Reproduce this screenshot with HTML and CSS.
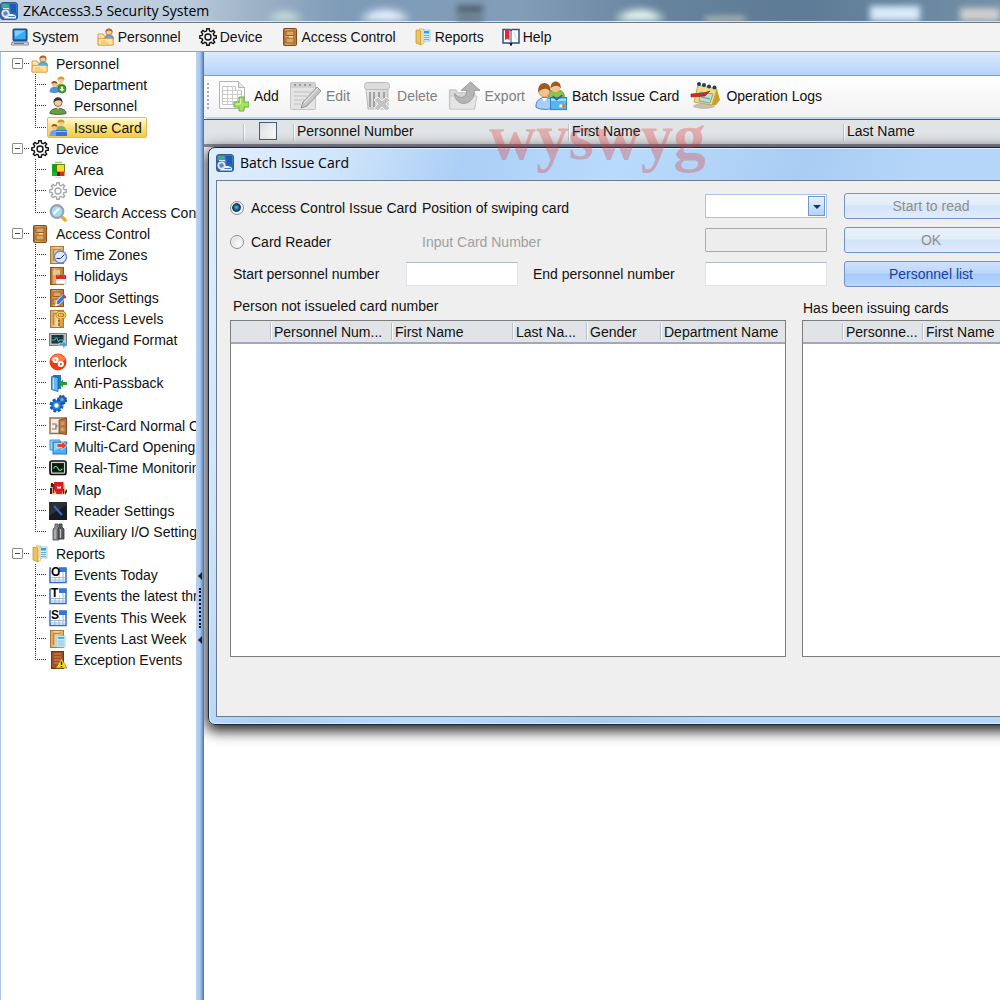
FILE: index.html
```
<!DOCTYPE html>
<html lang="en">
<head>
<meta charset="utf-8">
<title>ZKAccess3.5 Security System</title>
<link rel="stylesheet" href="styles.css">
</head>
<body>
<svg class="sprite" aria-hidden="true">
  <defs>
    <linearGradient id="gDoor" x1="0" x2="1"><stop offset="0" stop-color="#9a5a20"/><stop offset=".25" stop-color="#e8ad68"/><stop offset="1" stop-color="#b87838"/></linearGradient>
    <linearGradient id="gFold" x1="0" y1="0" x2="0" y2="1"><stop offset="0" stop-color="#fff0c0"/><stop offset="1" stop-color="#efb04e"/></linearGradient>
    <linearGradient id="gGrey" x1="0" y1="0" x2="1" y2="1"><stop offset="0" stop-color="#ececec"/><stop offset="1" stop-color="#c4c4c4"/></linearGradient>
    <linearGradient id="gFrame" x1="0" y1="0" x2="1" y2="0"><stop offset="0" stop-color="#cfa468"/><stop offset=".5" stop-color="#f6dca8"/><stop offset="1" stop-color="#dca75c"/></linearGradient>
  </defs>
  <symbol id="app" viewBox="0 0 18 18"><rect x=".5" y=".5" width="17" height="17" rx="2.500" fill="#2a68b8" stroke="#3b5c86"/><path d="M1.500 1.500h15v9L1.500 6z" fill="#4b90dc"/><path d="M9 2h7v9l-5-1z" fill="#1f5cb0"/><rect x="3" y="2.500" width="5" height="2.500" fill="#28c840"/><path d="M3 6.500h6" stroke="#dcebfa"/><path d="M6 13c2-1 7-2 10 1v2.500H4z" fill="#eef3f8"/><path d="M7 14.500h8" stroke="#4a80c0"/><circle cx="5.500" cy="11.500" r="3.200" fill="#5b88bd" stroke="#e4e8ee" stroke-width="1.800"/></symbol>
  <symbol id="computer" viewBox="0 0 18 18"><rect x="2" y="1" width="14" height="12" rx="1" fill="#2467b4" stroke="#1b3f72"/><path d="M3.500 2.500h11v8.500h-11z" fill="#38aef8"/><path d="M3.500 2.500h11L4 9z" fill="#7bd0ff"/><path d="M1 14h16l.5 3H.5z" fill="#d4d8de" stroke="#707780" stroke-width=".8"/><path d="M3 15.500h10" stroke="#777"/></symbol>
  <symbol id="folderman" viewBox="0 0 18 18"><path d="M1 17V6h5l1 2h9v9z" fill="url(#gFold)" stroke="#e09b3c"/><circle cx="12" cy="4" r="3.200" fill="#f5c99b" stroke="#99602c" stroke-width=".7"/><path d="M8.500 4C8-.5 16-.5 15.500 4c-2-2-4-2-7 0z" fill="#a7622a"/><path d="M7.500 11c0-5 9-5 9 0z" fill="#58aee8" stroke="#2c78b8" stroke-width=".6"/><path d="M1.500 10.500h14.500v6.500H1z" fill="#fde5a5" stroke="#e09b3c" stroke-width=".8"/><path d="M4 13h5M4 15h8" stroke="#eab75c"/></symbol>
  <symbol id="gear" viewBox="0 0 18 18"><g fill="none" stroke="currentColor"><path d="M7.800.8h2.400l.4 2.300 1.600.7 1.900-1.400 1.600 1.600-1.400 1.900.7 1.600 2.300.4v2.300l-2.300.4-.7 1.600 1.400 1.900-1.600 1.600-1.900-1.400-1.600.7-.4 2.200H7.800L7.400 15l-1.600-.7-1.900 1.400-1.600-1.600 1.400-1.900-.7-1.600-2.200-.4V7.900l2.200-.4.7-1.600-1.400-1.900 1.600-1.600 1.900 1.400 1.600-.7z" stroke-width="1.400"/><circle cx="9" cy="9" r="3" stroke-width="1.400"/></g></symbol>
  <symbol id="door" viewBox="0 0 18 18"><rect x="2.500" y=".5" width="13" height="17" rx="1" fill="url(#gDoor)" stroke="#84481a"/><path d="M5 3h8v4.500H5zM5 10h8v5H5z" fill="#dda462" stroke="#96602c"/><path d="M8 8.800h4" stroke="#ffe9a0" stroke-width="1.500"/></symbol>
  <symbol id="report" viewBox="0 0 18 18"><path d="M2 2l5 1v14l-5-2z" fill="#eec25c" stroke="#c28f2c" stroke-width=".7"/><path d="M5 1h5v14l-3 2V3z" fill="#ffeeb5" stroke="#d5a843" stroke-width=".7"/><rect x="9" y="2" width="7" height="11" fill="#def3fc" stroke="#8ac4e0" stroke-width=".7"/><rect x="10" y="3" width="5" height="2.500" fill="#2ea3dc"/><path d="M10 7.500h5M10 9.500h5M10 11.500h5" stroke="#75a8c0"/></symbol>
  <symbol id="help" viewBox="0 0 18 18"><path d="M1 1.500h7l1 1 1-1h7v13.500h-7l-1 2-1-2H1z" fill="#fff" stroke="#27547c" stroke-width="1.500"/><path d="M3 1h4.500v11.500l-2.200-2-2.300 2z" fill="#e62434"/><path d="M9 3v13" stroke="#27547c"/><path d="M12 4l3 8" stroke="#dde8f0" stroke-width="2"/><path d="M7.500 15h3L9 18z" fill="#111"/></symbol>
  <symbol id="dept" viewBox="0 0 18 18"><circle cx="12" cy="4" r="3" fill="#f6cb9c"/><path d="M8.500 4C8-.8 16-.8 15.500 4c-2-1.500-5-1.500-7 0z" fill="#e39a23"/><path d="M7 12c0-6 10-6 10 0v1H7z" fill="#7fb54c"/><circle cx="5.500" cy="8" r="2.800" fill="#f4c091"/><path d="M2.500 8C2 4 9 4 8.500 8c-2-1.500-4-1.500-6 0z" fill="#9a501e"/><path d="M.5 16c0-7 10-7 10 0-3 1.500-7 1.500-10 0z" fill="#4c93dc"/><circle cx="13" cy="13" r="4" fill="#4a9a3c" stroke="#2a6a25" stroke-width=".7"/><path d="M12 10.500h2v2.500h1.500L13 15.800 10.500 13H12z" fill="#e9ffd8"/></symbol>
  <symbol id="person" viewBox="0 0 18 18"><path d="M.8 16.500c0-7 16.400-7 16.400 0-4 1.300-12 1.300-16.400 0z" fill="#659f48" stroke="#325d2a" stroke-width=".8"/><circle cx="9" cy="5.500" r="4" fill="#f3ca9d" stroke="#654020" stroke-width=".7"/><path d="M4.500 5.500C4-1.500 14-1.500 13.500 5.500c-1-3-6-3-9 0z" fill="#373028"/><path d="M7 10.500h4l-2 2z" fill="#f3ca9d"/></symbol>
  <symbol id="issue" viewBox="0 0 18 18"><circle cx="12" cy="4" r="3" fill="#f6cb9c"/><path d="M8.500 4C8-.8 16-.8 15.500 4c-2-1.500-5-1.500-7 0z" fill="#d5901f"/><path d="M7 11c0-5.500 10-5.500 10 0z" fill="#7fb54c"/><circle cx="5.500" cy="8" r="2.800" fill="#f4c091"/><path d="M2.500 8C2 4 9 4 8.500 8c-2-1.500-4-1.500-6 0z" fill="#9a501e"/><path d="M.5 17c0-8 10-8 10 0z" fill="#6ba6e6"/><rect x="7" y="11" width="11" height="6" fill="#3675dc"/><path d="M7 12.500h11" stroke="#9cc5ff"/></symbol>
  <symbol id="area" viewBox="0 0 18 18"><path d="M6 1.500h7" stroke="#9bcb67" stroke-width="1.500"/><rect x="3" y="3" width="6" height="12" fill="#13a021"/><rect x="7.500" y="3.500" width="8" height="7.500" fill="#f8da1e" stroke="#4a6a00" stroke-width=".8"/><rect x="3" y="11" width="5" height="4" fill="#16b82c"/><rect x="8" y="11" width="3" height="4" fill="#6b1c10"/><rect x="11" y="11" width="4.500" height="4" fill="#e3271b"/><path d="M6 16.500h6" stroke="#ffd0a0"/></symbol>
  <symbol id="search" viewBox="0 0 18 18"><path d="M13.500 13.500l2.500 2.500" stroke="#f2ab20" stroke-width="3.500" stroke-linecap="round"/><circle cx="8" cy="7.500" r="6.300" fill="#a9dbf8" stroke="#9ca3aa" stroke-width="2.200"/><path d="M4 9l5-5 2 1-6 6z" fill="#f2fbff"/></symbol>
  <symbol id="frame" viewBox="0 0 18 18"><rect x="1.500" y=".5" width="13" height="17" fill="url(#gFrame)" stroke="#ae7835"/><path d="M4.500 15V3.500H12" fill="none" stroke="#c08a44" stroke-width="1.500"/></symbol>
  <symbol id="timezone" viewBox="0 0 18 18"><use href="#frame"/><circle cx="11.500" cy="11" r="6" fill="#dcecff" stroke="#6f82cf" stroke-width="1.300"/><path d="M7.500 12.500l4 0 4-4" stroke="#28306e" fill="none"/></symbol>
  <symbol id="holiday" viewBox="0 0 18 18"><rect x="1.500" y=".5" width="13" height="17" fill="url(#gDoor)" stroke="#8d5420"/><path d="M4 3h7v5H4z" fill="#edc58a"/><rect x="7" y="9" width="10" height="8" fill="#fff" stroke="#bbb" stroke-width=".7"/><path d="M7 8h10v4H7z" fill="#dd2920"/><path d="M9 6.500v3M15 6.500v3" stroke="#999"/></symbol>
  <symbol id="doorset" viewBox="0 0 18 18"><rect x="1.500" y=".5" width="13" height="17" fill="url(#gDoor)" stroke="#8d5420"/><path d="M4 3h8v4.500H4zM4 10h8v5H4z" fill="#dca562" stroke="#9a602a"/><path d="M14.500 5l3 3-7 7-4 2 1.200-5z" fill="#2f7ae0" stroke="#fff" stroke-width=".9"/><path d="M14.500 5l3 3-1.500 1.500-3-3z" fill="#db3a30"/><path d="M6.500 17l.8-2.800 1.700 1.600z" fill="#fff"/></symbol>
  <symbol id="levels" viewBox="0 0 18 18"><use href="#frame"/><g fill="none" stroke="#a86c10"><ellipse cx="12" cy="5" rx="4" ry="2.800" stroke-width="2.800"/><path d="M12 7v10M12 11h-3M12 14.500h-3" stroke-width="2.600"/></g><g fill="none" stroke="#f8cf50"><ellipse cx="12" cy="5" rx="4" ry="2.800" stroke-width="1.500"/><path d="M12 7.500v9" stroke-width="1.300"/></g></symbol>
  <symbol id="wiegand" viewBox="0 0 18 18"><rect x=".5" y="2.500" width="17" height="12" fill="#b8bec2" stroke="#777d82"/><rect x="2.500" y="4" width="12" height="8.500" fill="#17313a"/><path d="M3 9h3l1.500-3 2 5 1-2H14" fill="none" stroke="#43cfc6"/><path d="M3 6.500h11M6 4v8" stroke="#3a626a" stroke-width=".5"/><path d="M10 12h4V9.500l4 4-4 4V15h-4z" fill="#3f9bea" stroke="#fff" stroke-width=".5"/></symbol>
  <symbol id="interlock" viewBox="0 0 18 18"><circle cx="9" cy="9" r="8.500" fill="#ea3b15"/><path d="M1.500 7a7.800 7.800 0 0 1 15 0c-4 2-11 2-15 0z" fill="#f87e4a"/><circle cx="6.500" cy="7" r="2.100" fill="none" stroke="#fff" stroke-width="2"/><circle cx="11.800" cy="11" r="2.100" fill="none" stroke="#fff" stroke-width="2"/></symbol>
  <symbol id="passback" viewBox="0 0 18 18"><path d="M4 1h8v14H4z" fill="#1f77c6"/><path d="M2.500 2.500l6.500 1v14l-6.500-2z" fill="#68b8f0" stroke="#1760a5" stroke-width=".8"/><path d="M4.500 4v11" stroke="#b7e1ff"/><path d="M10 9.500l4-4v2.600h4V11h-4v2.600z" fill="#2f9c38"/></symbol>
  <symbol id="linkage" viewBox="0 0 18 18"><circle cx="13" cy="5" r="4" fill="#2873c7" stroke="#174b94" stroke-dasharray="2 1.140" stroke-width="2"/><circle cx="7.500" cy="10.500" r="5.500" fill="#2e80d6" stroke="#165ab0" stroke-width="3" stroke-dasharray="2.800 1.520"/><circle cx="7.500" cy="10.500" r="2.200" fill="#fff"/><circle cx="13" cy="4.500" r="1.500" fill="#6baaf0"/></symbol>
  <symbol id="firstcard" viewBox="0 0 18 18"><rect x="1" y="1" width="16" height="15.500" fill="#f4ece2" stroke="#9a7044" stroke-width="1.500"/><path d="M10 3l7.500-2v16.500L10 16z" fill="#b8713b" stroke="#784116" stroke-width=".8"/><path d="M11.500 5l4-1v4l-4 .5zM11.500 10.500h4v4l-4-.5z" fill="#d59a64"/><path d="M3 12h4V9M3 7h4v2h2" fill="none" stroke="#777" stroke-width="1.200"/></symbol>
  <symbol id="multicard" viewBox="0 0 18 18"><path d="M1 2h10v10H1z" fill="#9ed2f8" stroke="#3b8fd6"/><rect x="4" y="4" width="13.500" height="12" fill="#4fb0f0" stroke="#2079c5"/><path d="M5 5h11v3L5 13z" fill="#8fd2fb"/><path d="M8 5.500h5V3l5 4.500-5 4.500V9.500H8z" fill="#e6432a" stroke="#fff" stroke-width=".6"/></symbol>
  <symbol id="monitor" viewBox="0 0 18 18"><rect x="1" y="2" width="16" height="13.500" rx="2" fill="#d7d7d7" stroke="#111" stroke-width="1.700"/><rect x="3.500" y="4.500" width="11" height="8.500" fill="#0b1a10" stroke="#222"/><path d="M4.500 9.500c1.500-3 3-3 4.500 0s3 2 4.500 0" fill="none" stroke="#70e486" stroke-width="1.200"/></symbol>
  <symbol id="map" viewBox="0 0 18 18"><path d="M1 3l4 1 4-1 4 1 3-1v10l-3 1-4-1-4 1-4-1z" fill="#e9cf9e"/><path d="M2 2h2v4H2zM1 7h2v6H1z" fill="#23242c"/><path d="M5 1h9.500v7l-2 5h-5L5 8z" fill="#d91d20"/><path d="M8 5l2 1 2-1v2.500H8z" fill="#fff"/><path d="M4.500 3v9M14.500 8v5" stroke="#8d1418" stroke-width="1.500"/><path d="M16 10l2-2v3l-2 3z" fill="#333"/></symbol>
  <symbol id="reader" viewBox="0 0 18 18"><rect width="18" height="18" fill="#17191f"/><path d="M0 0h18v3L0 14z" fill="#2b2f36"/><path d="M5 4l8 9" stroke="#2e6fd2" stroke-width="2"/></symbol>
  <symbol id="aux" viewBox="0 0 18 18"><path d="M4 17V6l2-2V1h3v3l1 2v11z" fill="#8a8c8e" stroke="#4c4c4c" stroke-width=".8"/><path d="M9 16V6l1-2V1h3v3l2 2v10z" fill="#5a5c5e" stroke="#2f2f2f" stroke-width=".8"/><path d="M6 7v9M11.500 6v9" stroke="#c2c4c5" stroke-width="1.200"/></symbol>
  <symbol id="calendar" viewBox="0 0 18 18"><rect x="1" y="2" width="16" height="14.500" fill="#fff" stroke="#2d6fc8" stroke-width="1.500"/><path d="M9 2h8.500v4H9z" fill="#3576d0"/><path d="M2 11.500h14.500M2 14h14.500M6 8v8M10 8v8M14 6v10" stroke="#9fb8d6"/><path d="M2 1h8v10H2z" fill="#fff"/></symbol>
  <symbol id="lastweek" viewBox="0 0 18 18"><use href="#frame"/><rect x="8" y="6" width="8" height="11" fill="#e2f5fd" stroke="#8fc9e5" stroke-width=".8"/><path d="M9 7h6v2H9z" fill="#3bb5e8"/><path d="M9 11h6M9 13h6M9 15h6" stroke="#6dbbdd"/></symbol>
  <symbol id="exception" viewBox="0 0 18 18"><rect x="2.500" y=".5" width="12" height="17" fill="#a34f26" stroke="#6f3212"/><path d="M5 3h7M5 6h7M5 9h7M5 12h5" stroke="#c4774a" stroke-width="1.300"/><path d="M12.500 7.500l5.300 9.500H7z" fill="#f8d825" stroke="#9c7c00" stroke-width=".7"/><path d="M12.500 10.500v3.500M12.500 15v1.200" stroke="#222" stroke-width="1.400"/></symbol>

  <symbol id="add" viewBox="0 0 32 32"><path d="M2.500 1.500h19l6 6v21h-25z" fill="#fafafa" stroke="#b4b4b4"/><path d="M21.500 1.500v6h6" fill="#e6e6e6" stroke="#b4b4b4"/><path d="M5.500 6.500h13v4h6v14h-19z" fill="#fff" stroke="#c4c4c4"/><path d="M5 10.500h19M5 14.500h19M5 18.500h19M5 21.500h19M10.500 6v18M15.500 6v18M20.500 10v14" stroke="#cdcdcd"/><path d="M22 17h5v5h5v5h-5v4h-5v-4h-5v-5h5z" fill="#a5e060" stroke="#6fb13c"/><path d="M23.500 19v5H19" stroke="#d9f8b0" fill="none"/></symbol>
  <symbol id="edit" viewBox="0 0 32 32"><rect x="1.500" y="2.500" width="25" height="27" rx="1" fill="#e4e4e4" stroke="#c4c4c4"/><path d="M2 3h24v5H2z" fill="#d2d2d2"/><path d="M5 5h2M10 5h2M15 5h2M20 5h2" stroke="#999" stroke-width="2"/><path d="M5 12h17M5 16h13M5 20h10M5 24h7" stroke="#c0c0c0"/><path d="M28 7l4 4-14 15-6 2 2-6z" fill="#c6c6c6" stroke="#989898"/><path d="M29 8L15 23" stroke="#eee"/></symbol>
  <symbol id="delete" viewBox="0 0 32 32"><path d="M6 9h22v20H8z" fill="url(#gGrey)" stroke="#bbb"/><rect x="4.500" y="2.500" width="25" height="7" rx="3" fill="#dcdcdc" stroke="#b8b8b8"/><path d="M10 12v15M14 12v15M19 12v7M24 12v6" stroke="#a2a2a2" stroke-width="2"/><path d="M18 17l4 4 4-4 4 3-4 4 4 4-4 3-4-4-4 4-4-3 4-4-4-4z" fill="#c4c4c4" stroke="#f4f4f4"/></symbol>
  <symbol id="export" viewBox="0 0 34 32"><path d="M1.500 29.500v-20h7l2 3h18v17z" fill="#dadada" stroke="#bcbcbc"/><path d="M2 16h29l-3 14H2z" fill="#e4e4e4" stroke="#c6c6c6"/><path d="M7 13c0 15 21 15 21-3h6L24 1 14 10h6c0 9-9 10-13 3z" fill="#b4b4b4" stroke="#9a9a9a"/></symbol>
  <symbol id="batch" viewBox="0 0 34 32"><path d="M14 16c0-9 17-9 17 0v6H14z" fill="#8cc34f" stroke="#5f9130"/><circle cx="22" cy="7" r="5" fill="#f5c48e"/><path d="M16.500 8C16-2 28-2 27.500 8c-2-4-8-4-11 0z" fill="#9a5b20"/><path d="M1 28c-1-14 20-14 19 0-4 3-14 3-19 0z" fill="#a7cff5" stroke="#3c7fc6"/><circle cx="10" cy="11" r="6" fill="#f5c48e" stroke="#b06d35" stroke-width=".6"/><path d="M3.500 12C2-1 18-1 16.500 12c-2-5-9-5-13 0z" fill="#a1571d"/><path d="M7 18l3 4 3-4" fill="#fff"/><rect x="16.500" y="17.500" width="17" height="13" fill="#55b4f2" stroke="#2a82c8"/><path d="M17 20h16" stroke="#b6e2ff" stroke-width="2"/><path d="M19 16l4 4 6-5" stroke="#2456a4" stroke-width="1.500" fill="none"/><path d="M26 25h3v3h-3z" fill="#fff"/><path d="M29 25h3v3h-3z" fill="#e57d28"/></symbol>
  <symbol id="logs" viewBox="0 0 32 32"><ellipse cx="15" cy="26" rx="11" ry="3" fill="#c4c0b8"/><path d="M9 5l19 4-5 16-18-3z" fill="#f2dc86" stroke="#c6a443"/><path d="M28 9l3 11-4 5h-4z" fill="#c9a02c"/><path d="M11 12l13 2-3 9-11-2z" fill="#b8ddd2" stroke="#80a9a0"/><path d="M12 17l9 2" stroke="#619a91"/><g fill="#233b6f"><circle cx="10" cy="4" r="2"/><circle cx="15" cy="5" r="2"/><circle cx="20" cy="6.500" r="2"/><circle cx="25.500" cy="7.500" r="2"/></g><path d="M2 14l13-1 6-2-5 5-14 1z" fill="#d42b1c" stroke="#8a1710" stroke-width=".6"/></symbol>
</svg>

<header class="titlebar">
  <span class="smudges" aria-hidden="true"></span>
  <svg class="icon"><use href="#app"/></svg><h1>ZKAccess3.5 Security System</h1>
</header>
<nav class="menubar">
  <button><svg class="icon"><use href="#computer"/></svg>System</button>
  <button><svg class="icon"><use href="#folderman"/></svg>Personnel</button>
  <button><svg class="icon"><use href="#gear"/></svg>Device</button>
  <button><svg class="icon"><use href="#door"/></svg>Access Control</button>
  <button><svg class="icon"><use href="#report"/></svg>Reports</button>
  <button><svg class="icon"><use href="#help"/></svg>Help</button>
</nav>

<div class="workspace">
  <aside class="tree">
    <section>
      <h2><span class="toggle"></span><svg class="icon"><use href="#folderman"/></svg>Personnel</h2>
      <ul>
        <li><a href="#"><svg class="icon"><use href="#dept"/></svg>Department</a></li>
        <li><a href="#"><svg class="icon"><use href="#person"/></svg>Personnel</a></li>
        <li><a href="#" class="selected"><svg class="icon"><use href="#issue"/></svg>Issue Card</a></li>
      </ul>
    </section>
    <section>
      <h2><span class="toggle"></span><svg class="icon"><use href="#gear"/></svg>Device</h2>
      <ul>
        <li><a href="#"><svg class="icon"><use href="#area"/></svg>Area</a></li>
        <li><a href="#"><svg class="icon pale"><use href="#gear"/></svg>Device</a></li>
        <li><a href="#"><svg class="icon"><use href="#search"/></svg>Search Access Control</a></li>
      </ul>
    </section>
    <section>
      <h2><span class="toggle"></span><svg class="icon"><use href="#door"/></svg>Access Control</h2>
      <ul>
        <li><a href="#"><svg class="icon"><use href="#timezone"/></svg>Time Zones</a></li>
        <li><a href="#"><svg class="icon"><use href="#holiday"/></svg>Holidays</a></li>
        <li><a href="#"><svg class="icon"><use href="#doorset"/></svg>Door Settings</a></li>
        <li><a href="#"><svg class="icon"><use href="#levels"/></svg>Access Levels</a></li>
        <li><a href="#"><svg class="icon"><use href="#wiegand"/></svg>Wiegand Format</a></li>
        <li><a href="#"><svg class="icon"><use href="#interlock"/></svg>Interlock</a></li>
        <li><a href="#"><svg class="icon"><use href="#passback"/></svg>Anti-Passback</a></li>
        <li><a href="#"><svg class="icon"><use href="#linkage"/></svg>Linkage</a></li>
        <li><a href="#"><svg class="icon"><use href="#firstcard"/></svg>First-Card Normal Open</a></li>
        <li><a href="#"><svg class="icon"><use href="#multicard"/></svg>Multi-Card Opening</a></li>
        <li><a href="#"><svg class="icon"><use href="#monitor"/></svg>Real-Time Monitoring</a></li>
        <li><a href="#"><svg class="icon"><use href="#map"/></svg>Map</a></li>
        <li><a href="#"><svg class="icon"><use href="#reader"/></svg>Reader Settings</a></li>
        <li><a href="#"><svg class="icon"><use href="#aux"/></svg>Auxiliary I/O Settings</a></li>
      </ul>
    </section>
    <section>
      <h2><span class="toggle"></span><svg class="icon"><use href="#report"/></svg>Reports</h2>
      <ul>
        <li><a href="#"><span class="dated"><svg class="icon"><use href="#calendar"/></svg><b>O</b></span>Events Today</a></li>
        <li><a href="#"><span class="dated"><svg class="icon"><use href="#calendar"/></svg><b>T</b></span>Events the latest three days</a></li>
        <li><a href="#"><span class="dated"><svg class="icon"><use href="#calendar"/></svg><b>S</b></span>Events This Week</a></li>
        <li><a href="#"><svg class="icon"><use href="#lastweek"/></svg>Events Last Week</a></li>
        <li><a href="#"><svg class="icon"><use href="#exception"/></svg>Exception Events</a></li>
      </ul>
    </section>
  </aside>
  <div class="splitter"><i class="arrow"></i><i class="grip"></i><i class="arrow"></i></div>

  <main>
    <div class="band"></div>
    <div class="toolbar">
      <i class="handle"></i>
      <button><svg><use href="#add"/></svg>Add</button>
      <button disabled><svg><use href="#edit"/></svg>Edit</button>
      <button disabled><svg><use href="#delete"/></svg>Delete</button>
      <button disabled><svg><use href="#export"/></svg>Export</button>
      <button><svg><use href="#batch"/></svg>Batch Issue Card</button>
      <button><svg><use href="#logs"/></svg>Operation Logs</button>
    </div>
    <table class="grid people">
      <colgroup><col class="c-mark"><col class="c-check"><col class="c-name"><col class="c-name"><col></colgroup>
      <thead><tr><th></th><th><input type="checkbox" aria-label="Select all"></th><th>Personnel Number</th><th>First Name</th><th>Last Name</th></tr></thead>
    </table>

    <div class="dialog" role="dialog" aria-labelledby="dlg-title">
      <div class="dialog-title"><svg class="icon"><use href="#app"/></svg><h2 id="dlg-title">Batch Issue Card</h2></div>
      <form class="dialog-body">
        <div class="fields">
          <div class="row low">
            <label class="first"><input type="radio" name="mode" checked>Access Control Issue Card</label>
            <label for="position">Position of swiping card</label>
          </div>
          <div class="combo"><select id="position"><option></option></select><i></i></div>
          <button type="button" disabled>Start to read</button>

          <div class="row low">
            <label class="first"><input type="radio" name="mode">Card Reader</label>
            <label for="cardno" class="off">Input Card Number</label>
          </div>
          <input id="cardno" type="text" disabled>
          <button type="button" disabled>OK</button>

          <div class="row range">
            <label for="start">Start personnel number</label>
            <input id="start" type="text">
            <label for="end">End personnel number</label>
          </div>
          <input id="end" type="text">
          <button type="button">Personnel list</button>
        </div>
        <div class="lists">
          <section>
            <h3>Person not issueled card number</h3>
            <div class="listbox">
              <table class="grid">
                <colgroup><col class="c-mark"><col class="c-wide"><col class="c-wide"><col class="c-mid"><col class="c-mid"><col></colgroup>
                <thead><tr><th></th><th>Personnel Num...</th><th>First Name</th><th>Last Na...</th><th>Gender</th><th>Department Name</th></tr></thead>
              </table>
            </div>
          </section>
          <section>
            <h3>Has been issuing cards</h3>
            <div class="listbox">
              <table class="grid">
                <colgroup><col class="c-mark"><col class="c-num"><col></colgroup>
                <thead><tr><th></th><th>Personne...</th><th>First Name</th></tr></thead>
              </table>
            </div>
          </section>
        </div>
      </form>
    </div>
    <div class="watermark">wyswyg</div>
  </main>
</div>
</body>
</html>
```
FILE: styles.css
```
* { box-sizing: border-box; }
html, body { height: 100%; }
body {
  margin: 0;
  display: flex;
  flex-direction: column;
  overflow: hidden;
  background: #fff;
  color: #111;
  font: 14px/20px "Liberation Sans", Arial, sans-serif;
}
h1, h2, h3, ul { margin: 0; padding: 0; font: inherit; list-style: none; }
button, input, select { font: inherit; color: inherit; margin: 0; }
button { cursor: pointer; }
.sprite { position: absolute; width: 0; height: 0; }
.icon { width: 18px; height: 18px; flex: none; }

/* window frame */
.titlebar {
  position: relative;
  display: flex;
  align-items: center;
  gap: 5px;
  flex: none;
  height: 23px;
  overflow: hidden;
  border-bottom: 1px solid #6d7883;
  box-shadow: inset 0 -1px #dfe7ee;
  background: linear-gradient(90deg, #c3d2e2, #bccddd 18%, #9fb4c8 25%, #7e9bb8 34%, #829db8 52%, #67839d 66%, #5d7b96 80%, #7590a8);
  font: 14px/20px "Open Sans", "Noto Sans", sans-serif;
  color: #000;
}
.titlebar .icon, .titlebar h1 { position: relative; }
.smudges {
  position: absolute;
  inset: 4px 0 1px;
  filter: blur(3px);
  background:
    radial-gradient(20px 12px at 285px 16px, #c4dcd9 40%, transparent),
    radial-gradient(28px 14px at 385px 16px, #e2effd 50%, transparent),
    radial-gradient(28px 14px at 640px 16px, #e0f4f0 50%, transparent),
    linear-gradient(#46525e, #46525e) 457px 2px / 26px 6px no-repeat,
    linear-gradient(#56636f, #56636f) 457px 13px / 26px 5px no-repeat,
    linear-gradient(#d0d0c0, #d0d0c0) 705px 13px / 40px 6px no-repeat,
    linear-gradient(#d8ebfc, #d8ebfc) 870px 2px / 50px 18px no-repeat,
    linear-gradient(#cfcfd0, #cfcfd0) 960px 4px / 40px 16px no-repeat;
}
.menubar {
  display: flex;
  align-items: center;
  gap: 18px;
  flex: none;
  height: 29px;
  padding: 0 11px;
  background: #f3f3f3;
  border-bottom: 1px solid #7ba5dc;
}
.menubar button, .toolbar button {
  display: flex;
  align-items: center;
  padding: 0;
  border: 0;
  background: none;
  white-space: nowrap;
}
.menubar button { gap: 3px; }
.workspace { display: flex; flex: 1; min-height: 0; }

/* navigation tree */
.tree {
  flex: none;
  width: 196px;
  padding-top: 1px;
  border-left: 1px solid #a9c5e8;
  overflow: hidden;
  white-space: nowrap;
}
.tree h2 { display: flex; align-items: center; height: 21px; padding-left: 11px; }
.tree h2 .icon { margin-right: 7px; }
.toggle {
  position: relative;
  width: 11px;
  height: 11px;
  margin-right: 8px;
  border: 1px solid #8e8e8e;
  border-radius: 1px;
  background: linear-gradient(#555, #555) center / 5px 1px no-repeat #fff;
}
.toggle::after { content: ""; position: absolute; left: 11px; top: 4px; width: 5px; border-top: 1px dotted #333; }
.tree ul { margin-left: 34px; }
.tree li { position: relative; display: flex; align-items: center; height: 21px; padding-left: 12px; }
.tree li:nth-child(3n+2) { height: 22px; }
.tree li::before { content: ""; position: absolute; left: 0; top: 0; bottom: 0; border-left: 1px dotted #333; }
.tree li:last-child::before { bottom: 50%; }
.tree li::after { content: ""; position: absolute; left: 0; top: 10px; width: 11px; border-top: 1px dotted #333; }
.tree a {
  display: flex;
  align-items: center;
  gap: 7px;
  height: 21px;
  padding: 0 4px 0 1px;
  border: 1px solid transparent;
  border-radius: 2px;
  color: inherit;
  text-decoration: none;
}
.tree .selected { border-color: #e0bd4c; background: linear-gradient(#fffbe0, #fbe384 45%, #f3cb45); }
.tree .pale { color: #a8a8a8; }
.dated { position: relative; display: flex; }
.dated b { position: absolute; left: 2px; top: 0; font-size: 12px; line-height: 12px; color: #000; }

.splitter {
  flex: none;
  width: 8px;
  padding-top: 520px;
  display: flex;
  flex-direction: column;
  align-items: center;
  gap: 8px;
  background: linear-gradient(90deg, #bcd3f0, #a9c7ee 50%, #6f98d4 80%, #46689f);
}
.arrow { border: 4px solid transparent; border-right: 4px solid #222; border-left: 0; }
.grip { height: 40px; border-left: 2px dotted #111; }

/* work area */
main { position: relative; flex: 1; min-width: 0; overflow: hidden; }
.band { height: 24px; background: linear-gradient(#dceafd, #b5d3fb); border-bottom: 1px solid #6f9fdf; }
.toolbar {
  display: flex;
  align-items: center;
  gap: 10px;
  height: 43px;
  padding: 0 0 2px 3px;
  border-bottom: 2px solid #b9d5f8;
  border-radius: 4px 0 0 4px;
  background: linear-gradient(#fff, #f2f2f2);
}
.toolbar button { gap: 5px; }
.toolbar button:disabled { color: #808080; cursor: default; }
.toolbar svg { width: 32px; height: 32px; flex: none; }
.handle { height: 26px; border-left: 2px dotted #a5adb8; margin-right: -2px; }

.grid { width: 100%; table-layout: fixed; border-collapse: separate; border-spacing: 0; }
.grid th {
  height: 23px;
  padding: 0 0 0 4px;
  border-bottom: 2px solid #a6a5bf;
  background: linear-gradient(90deg, #b9bfca 1px, #fff 1px, #fff 2px, transparent 2px) 0 50% / 100% 17px no-repeat, #e1e4e6;
  font-weight: normal;
  text-align: left;
  line-height: 18px;
  white-space: nowrap;
  overflow: hidden;
}
.grid th:first-child { background: #e1e4e6; }
.people { border-top: 1px solid #555; }
.people th { height: 27px; padding-bottom: 2px; border-bottom: 3px solid #8c8a9c; }
.people th:nth-child(2) { padding-left: 16px; }
.people input {
  appearance: none;
  display: block;
  width: 18px;
  height: 18px;
  border: 1px solid #42617e;
  background: linear-gradient(135deg, #dcdcdc, #fff);
}
.c-mark { width: 39px; }
.c-check { width: 50px; }
.c-name { width: 275px; }
.c-wide { width: 121px; }
.c-mid { width: 74px; }
.c-num { width: 80px; }

/* dialog */
.dialog {
  position: absolute;
  left: 4px;
  right: -40px;
  top: 95px;
  padding: 0 7px 7px;
  border: 1px solid #1b2938;
  border-radius: 7px;
  background: linear-gradient(110deg, #e0effc 0, #d2e6fb 12%, #abcff6 25%, #b9dbfb 40%, #a9cdf3 58%, #b5d6f8 70%);
  box-shadow: inset 0 0 0 1px #d9ecff, 0 4px 14px 2px #222;
}
.dialog-title {
  display: flex;
  align-items: center;
  gap: 6px;
  height: 32px;
  padding-bottom: 2px;
  font: 14px/20px "Open Sans", "Noto Sans", sans-serif;
  color: #000;
}
.dialog-body {
  padding: 8px 13px 59px;
  border: 1px solid #6b7c8f;
  background: #efefef;
}
.fields {
  display: grid;
  grid-template-columns: 475px 122px 1fr;
  grid-auto-rows: 34px;
  align-items: center;
}
.fields > button { margin-left: 17px; }
.row { display: flex; align-items: center; padding-left: 3px; white-space: nowrap; }
.low { padding: 4px 0 0; }
.first { display: flex; align-items: center; gap: 7px; width: 192px; }
.off { color: #a0a0a0; }
.range { gap: 15px; }
.range label:first-child { width: 158px; }
.fields input[type="text"], .fields select {
  width: 100%;
  height: 24px;
  padding: 0 4px;
  border: 1px solid #dfe3ea;
  border-top-color: #b4bac4;
  background: #fff;
}
.fields .range input[type="text"] { width: 112px; }
.fields input[type="text"]:disabled { border: 1px solid #acacac; border-radius: 1px; background: #ededed; }
.fields select { appearance: none; border: 1px solid #a9c4e8; }
.combo { position: relative; display: flex; }
.combo i {
  position: absolute;
  right: 2px;
  top: 2px;
  width: 17px;
  height: 20px;
  border: 1px solid #7198cd;
  background: linear-gradient(#e6f1ff, #b2d2fa);
  pointer-events: none;
}
.combo i::after { content: ""; position: absolute; left: 4px; top: 8px; border: 4px solid transparent; border-width: 4px 4px 0; border-top-color: #15356e; }
.fields input[type="radio"] {
  appearance: none;
  width: 14px;
  height: 14px;
  border: 1px solid #8b8f94;
  border-radius: 50%;
  background: radial-gradient(circle at 70% 70%, #fff, #cfd2d5);
  box-shadow: inset 0 0 0 1px #f6f6f6;
}
.fields input[type="radio"]:checked { background: radial-gradient(circle at 45% 45%, #5fc4ee 0, #14486e 3px, #12395a 4px, #e6ebef 5px); }
.fields button {
  height: 26px;
  border: 1px solid #7094c8;
  border-radius: 3px;
  background: linear-gradient(#cfe2fc, #bcd6fb 45%, #a5c9fa 50%, #b7d7ff);
  color: #1b3ea0;
}
.fields button:disabled { background: linear-gradient(#eaf1fb, #e3edfa 45%, #d3e3f8 50%, #e0ecfc); color: #8d8d8d; }
.lists { display: grid; grid-template-columns: 556px 1fr; column-gap: 16px; margin-top: 4px; }
.lists h3 { height: 25px; padding-left: 3px; line-height: 22px; }
.lists section + section h3 { padding-left: 1px; line-height: 26px; }
.listbox { height: 337px; border: 1px solid #7d7d7d; background: #fff; }

.watermark {
  position: absolute;
  left: 285px;
  top: 48px;
  font: bold 65px/74px "Liberation Serif", serif;
  color: #e03030;
  opacity: .3;
  pointer-events: none;
}
```
